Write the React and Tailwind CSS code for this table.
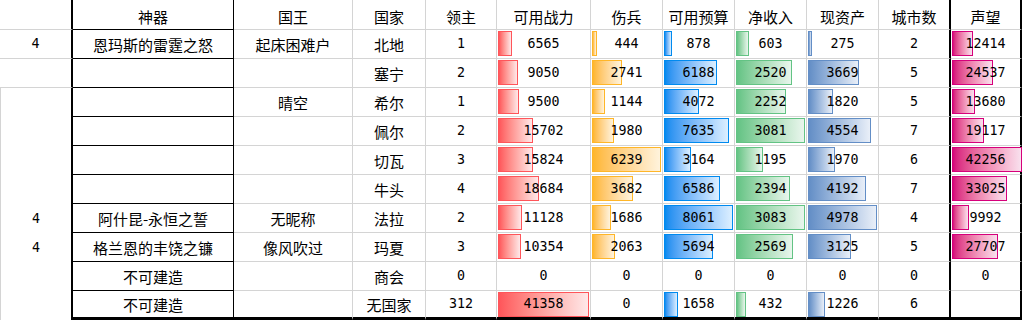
import React from "react";

const widths = [
  "w-[73px]", "w-[161px]", "w-[119px]", "w-[73px]", "w-[71px]", "w-[94px]",
  "w-[72px]", "w-[72px]", "w-[72px]", "w-[72px]", "w-[72px]", "w-[71px]",
];

const rightB = [
  "border-r-2 border-r-black",
  "border-r border-r-black",
  "border-r border-r-[#d4d4d4]",
  "border-r border-r-[#d4d4d4]",
  "border-r border-r-[#d4d4d4]",
  "border-r border-r-[#d4d4d4]",
  "border-r border-r-[#d4d4d4]",
  "border-r border-r-[#d4d4d4]",
  "border-r border-r-[#d4d4d4]",
  "border-r border-r-[#d4d4d4]",
  "border-r-2 border-r-black",
  "border-r-2 border-r-black",
];

const bars = {
  5: { max: 41358, mw: 91, cls: "border-[#ff555a] bg-linear-to-r from-[#ff555a] to-[#ffe8e9]" },
  6: { max: 6239, mw: 69, cls: "border-[#ffb628] bg-linear-to-r from-[#ffb628] to-[#fff3dc]" },
  7: { max: 8061, mw: 69, cls: "border-[#008aef] bg-linear-to-r from-[#008aef] to-[#dcefff]" },
  8: { max: 3083, mw: 69, cls: "border-[#63c384] bg-linear-to-r from-[#63c384] to-[#e9f6ed]" },
  9: { max: 4978, mw: 69, cls: "border-[#638ec6] bg-linear-to-r from-[#638ec6] to-[#e9eff8]" },
  11: { max: 42256, mw: 70, cls: "border-[#d6007b] bg-linear-to-r from-[#d6007b] to-[#f8e1ee]" },
};

const header = ["", "神器", "国王", "国家", "领主", "可用战力", "伤兵", "可用预算", "净收入", "现资产", "城市数", "声望"];

const rows = [
  ["4", "恩玛斯的雷霆之怒", "起床困难户", "北地", 1, 6565, 444, 878, 603, 275, 2, 12414],
  ["", "", "", "塞宁", 2, 9050, 2741, 6188, 2520, 3669, 5, 24537],
  ["", "", "晴空", "希尔", 1, 9500, 1144, 4072, 2252, 1820, 5, 13680],
  ["", "", "", "佩尔", 2, 15702, 1980, 7635, 3081, 4554, 7, 19117],
  ["", "", "", "切瓦", 3, 15824, 6239, 3164, 1195, 1970, 6, 42256],
  ["", "", "", "牛头", 4, 18684, 3682, 6586, 2394, 4192, 7, 33025],
  ["4", "阿什昆-永恒之誓", "无昵称", "法拉", 2, 11128, 1686, 8061, 3083, 4978, 4, 9992],
  ["4", "格兰恩的丰饶之镰", "像风吹过", "玛夏", 3, 10354, 2063, 5694, 2569, 3125, 5, 27707],
  ["", "不可建造", "", "商会", 0, 0, 0, 0, 0, 0, 0, 0],
  ["", "不可建造", "", "无国家", 312, 41358, 0, 1658, 432, 1226, 6, ""],
];

function bottomB(r, c) {
  if (r === 10) return c === 0 ? "" : "border-b-[3px] border-b-black";
  if (c === 0) return r <= 2 ? "border-b border-b-[#d4d4d4]" : "";
  if (c === 1) return "border-b border-b-black";
  return "border-b border-b-[#d4d4d4]";
}

function Cell({ r, c, value }) {
  const isNum = typeof value === "number" || c === 0;
  const bar = bars[c];
  const showBar = r > 0 && bar && typeof value === "number" && value > 0;
  const left = c === 0 && r >= 3 ? "border-l border-l-[#d4d4d4]" : "";
  const h = r === 0 ? "h-[30px] pt-[3px]" : "h-[29px]";
  return (
    <div
      className={`relative shrink-0 flex items-center justify-center ${widths[c]} ${h} ${rightB[c]} ${bottomB(r, c)} ${left}`}
    >
      {showBar && (
        <div
          className={`absolute left-[1px] top-[1px] h-[25px] border ${bar.cls}`}
          style={{ width: Math.max(3, Math.round((value / bar.max) * bar.mw)) + "px" }}
        />
      )}
      <span
        className={`relative whitespace-nowrap text-black leading-none ${
          isNum && r > 0
            ? "font-['DejaVu_Sans_Mono',monospace] text-[13.3px]"
            : "font-['Noto_Sans_CJK_SC',sans-serif] text-[15px]"
        }`}
      >
        {value}
      </span>
    </div>
  );
}

export default function App() {
  const all = [header, ...rows];
  return (
    <div className="w-[1023px] h-[320px] bg-white overflow-hidden">
      {all.map((row, r) => (
        <div key={r} className="flex">
          {row.map((v, c) => (
            <Cell key={c} r={r} c={c} value={v} />
          ))}
        </div>
      ))}
    </div>
  );
}
